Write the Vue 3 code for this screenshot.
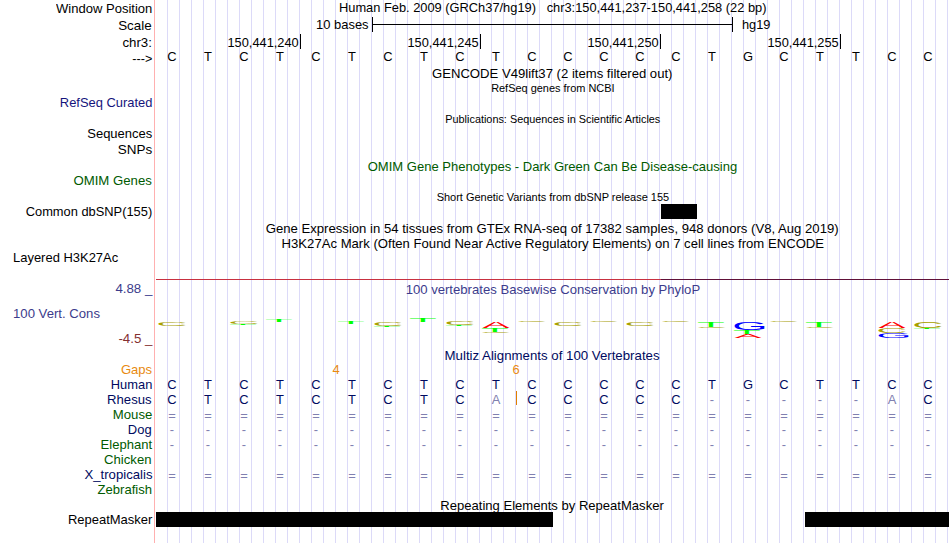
<script setup>
// Condenses a text run horizontally so it takes the given width.
const vFit = {
  mounted(el, { value }) {
    el.style.transform = `scaleX(${value / el.getBoundingClientRect().width})`
  },
}

// at: text baseline, w: text width
const labelList = [
  { text: 'Window Position', at: 13, w: 96.3 },
  { text: 'Scale', at: 30, w: 33.5 },
  { text: 'chr3:', at: 47, w: 29.5 },
  { text: '--->', at: 63, w: 20 },
  { text: 'RefSeq Curated', at: 107, w: 92.5, tone: 'blue' },
  { text: 'Sequences', at: 138, w: 65 },
  { text: 'SNPs', at: 154, w: 34.5 },
  { text: 'OMIM Genes', at: 185, w: 78.5, tone: 'green' },
  { text: 'Common dbSNP(155)', at: 216, w: 126.5 },
  { text: 'Layered H3K27Ac', at: 262, w: 105.2, side: 'start' },
  { text: '4.88 _', at: 293, w: 37, tone: 'indigo', side: 'edge' },
  { text: '100 Vert. Cons', at: 318, w: 87, tone: 'indigo', side: 'start' },
  { text: '-4.5 _', at: 343, w: 34, tone: 'maroon', side: 'edge' },
  { text: 'Gaps', at: 374, w: 31.2, tone: 'orange' },
  { text: 'Human', at: 389, w: 41.5, tone: 'navy' },
  { text: 'Rhesus', at: 404, w: 44.5, tone: 'navy' },
  { text: 'Mouse', at: 419, w: 39.5, tone: 'green' },
  { text: 'Dog', at: 434, w: 23.8, tone: 'navy' },
  { text: 'Elephant', at: 449, w: 51.5, tone: 'green' },
  { text: 'Chicken', at: 464, w: 47.5, tone: 'green' },
  { text: 'X_tropicalis', at: 479, w: 68, tone: 'navy' },
  { text: 'Zebrafish', at: 494, w: 54.5, tone: 'green' },
  { text: 'RepeatMasker', at: 524, w: 84.5 },
]
const labels = labelList.map((l, i) => ({
  ...l,
  h: i ? l.at - labelList[i - 1].at : l.at + 3,
}))

const HUMAN = 'CTCTCTCTCTCCCCCTGCTTCC'
const rows = [
  { kind: 'title', h: 15, w: 427.5, text: 'Human Feb. 2009 (GRCh37/hg19)\u00a0\u00a0 chr3:150,441,237-150,441,258 (22 bp)' },
  { kind: 'scale', h: 19 },
  { kind: 'ticks', h: 15 },
  { kind: 'bases', h: 15, text: HUMAN },
  { kind: 'title', h: 17, w: 240.5, text: 'GENCODE V49lift37 (2 items filtered out)' },
  { kind: 'title', h: 14, w: 123.5, small: true, text: 'RefSeq genes from NCBI' },
  { kind: 'title', h: 31, w: 215, small: true, text: 'Publications: Sequences in Scientific Articles' },
  { kind: 'title', h: 48, w: 369.5, tone: 'green', text: 'OMIM Gene Phenotypes - Dark Green Can Be Disease-causing' },
  { kind: 'title', h: 30, w: 232.5, small: true, text: 'Short Genetic Variants from dbSNP release 155' },
  { kind: 'blocks', h: 15, items: [[505, 36]] },
  { kind: 'title', h: 17, w: 573, text: 'Gene Expression in 54 tissues from GTEx RNA-seq of 17382 samples, 948 donors (V8, Aug 2019)' },
  { kind: 'title', h: 15, w: 542.5, text: 'H3K27Ac Mark (Often Found Near Active Regulatory Elements) on 7 cell lines from ENCODE' },
  { kind: 'rule', h: 29 },
  { kind: 'title', h: 17, w: 294.5, tone: 'indigo', text: '100 vertebrates Basewise Conservation by PhyloP' },
  { kind: 'logo', h: 51 },
  { kind: 'title', h: 15, w: 215, tone: 'navy', text: 'Multiz Alignments of 100 Vertebrates' },
  { kind: 'gaps', h: 14 },
  { kind: 'bases', h: 15, tone: 'navy', text: HUMAN },
  { kind: 'bases', h: 15, tone: 'navy', insert: true, text: 'CTCTCTCTCACCCCC-----AC', faint: [9, 15, 16, 17, 18, 19, 20] },
  { kind: 'bases', h: 15, tone: 'pale', low: true, text: '='.repeat(22) },
  { kind: 'bases', h: 15, tone: 'pale', text: '-'.repeat(22) },
  { kind: 'bases', h: 15, tone: 'pale', text: '-'.repeat(22) },
  { kind: 'space', h: 15 },
  { kind: 'bases', h: 15, tone: 'pale', low: true, text: '='.repeat(22) },
  { kind: 'space', h: 15 },
  { kind: 'title', h: 15, w: 223.5, low: true, text: 'Repeating Elements by RepeatMasker' },
  { kind: 'blocks', h: 15, items: [[0, 397], [252, 144]] },
]

const ticks = ['150,441,240', '150,441,245', '150,441,250', '150,441,255']

// Ink boxes of the letters at font size 100: left, width, height, descent
const INK = {
  C: { l: 5, w: 64, h: 74, d: 1.2, color: '#a8a000', out: 27.5, dx: 2.5 },
  T: { l: 2.1, w: 57, h: 69, d: 0, color: '#00ff00', out: 26, dx: 2 },
  A: { l: 0.2, w: 66.5, h: 69, d: 0, color: '#ff0000', out: 27, dx: 2.5 },
  G: { l: 5, w: 66, h: 71, d: 1.2, color: '#0000ff', out: 30, dx: 2.5 },
}
// column, letter, top, bottom (from the top of the track)
const stacks = [
  [0, 'C', 24.6, 29], [2, 'C', 24.7, 27.2], [2, 'T', 26.6, 28.1], [3, 'T', 22.1, 25],
  [5, 'T', 25, 27], [6, 'C', 24.6, 28.9], [6, 'T', 28.6, 30], [7, 'T', 21.1, 25],
  [8, 'C', 24.7, 28.1], [8, 'T', 27.5, 29], [9, 'A', 24.5, 31], [9, 'T', 31, 35],
  [9, 'C', 35, 35.9], [10, 'C', 24, 24.9], [11, 'C', 24.6, 28.9], [12, 'C', 24, 24.9],
  [13, 'C', 24.6, 28.9], [14, 'C', 24, 24.9], [15, 'T', 25, 30], [15, 'C', 30, 30.9],
  [16, 'G', 24.6, 33], [16, 'T', 33, 37], [16, 'A', 37, 41], [17, 'C', 24, 24.9],
  [18, 'T', 25, 30], [18, 'C', 30, 30.9], [20, 'A', 24.5, 31], [20, 'C', 31, 36],
  [20, 'G', 36, 41], [21, 'C', 24.6, 31], [21, 'T', 30.6, 32],
].map(([col, ch, top, bottom]) => {
  const k = INK[ch]
  const sx = k.out / k.w
  const sy = (bottom - top) / k.h
  const x = col * 36 + k.dx - k.l * sx
  const y = bottom - k.d * sy
  return { ch, color: k.color, transform: `matrix(${sx} 0 0 ${sy} ${x} ${y})` }
})
</script>

<template>
  <main class="browser">
    <aside class="labels">
      <div
        v-for="l in labels"
        :key="l.text"
        class="label"
        :class="[l.tone, l.side]"
        :style="{ height: l.h + 'px' }"
      >
        <span v-fit="l.w">{{ l.text }}</span>
      </div>
    </aside>

    <section class="plot">
      <div
        v-for="(r, i) in rows"
        :key="i"
        class="row"
        :class="[r.kind, r.tone, { small: r.small, low: r.low }]"
        :style="{ height: r.h + 'px' }"
      >
        <span v-if="r.kind === 'title'" v-fit="r.w">{{ r.text }}</span>

        <template v-else-if="r.kind === 'scale'">
          <div class="scale-left"><span v-fit="52.5">10 bases</span></div>
          <div class="bracket"><i></i></div>
          <span v-fit="28.5" class="assembly">hg19</span>
        </template>

        <template v-else-if="r.kind === 'ticks'">
          <div v-for="t in ticks" :key="t" class="tick"><span v-fit="71.3">{{ t }}</span></div>
        </template>

        <template v-else-if="r.kind === 'bases'">
          <b v-for="(c, n) in r.text" :key="n" :class="{ pale: r.faint?.includes(n) }">{{ c }}</b>
          <i v-if="r.insert" class="insert"></i>
        </template>

        <template v-else-if="r.kind === 'blocks'">
          <div
            v-for="[gap, width] in r.items"
            :key="gap"
            class="block"
            :style="{ marginLeft: gap + 'px', width: width + 'px' }"
          ></div>
        </template>

        <template v-else-if="r.kind === 'rule'"><i></i><i class="dark"></i></template>

        <svg v-else-if="r.kind === 'logo'" width="793" height="51" viewBox="0 0 793 51">
          <text v-for="(s, n) in stacks" :key="n" :transform="s.transform" :fill="s.color">{{ s.ch }}</text>
        </svg>

        <template v-else-if="r.kind === 'gaps'"><b>4</b><b>6</b></template>
      </div>
    </section>
  </main>
</template>

<style>
body {
  margin: 0;
  background: #fff;
}
</style>

<style scoped>
.browser {
  display: flex;
  width: 950px;
  height: 543px;
  overflow: hidden;
  font: 13.45px/15px "Liberation Sans", Arial, sans-serif;
  color: #000;
  background: #fff;
  white-space: nowrap;
}
.labels {
  box-sizing: border-box;
  width: 155px;
  border-right: 1px solid #ffb0b0;
}
.label {
  display: flex;
  align-items: flex-end;
  justify-content: flex-end;
  padding-right: 2px;
}
.label span {
  transform-origin: right;
}
.label.start {
  justify-content: flex-start;
  padding-left: 13px;
}
.label.start span {
  transform-origin: left;
}
.label.edge {
  padding-right: 1.5px;
}
.plot {
  width: 793px;
  margin-left: 1px;
  background: repeating-linear-gradient(90deg, transparent 0 11px, #dcdaf8 11px 12px);
}
.row {
  position: relative;
  display: flex;
}
.title {
  align-items: flex-end;
  justify-content: center;
}
.row.low {
  align-items: flex-start;
  line-height: 17px;
}
.small {
  font-size: 11.5px;
  line-height: 13px;
}
.scale {
  align-items: flex-start;
  line-height: 19px;
}
.scale-left {
  display: flex;
  justify-content: flex-end;
  width: 213px;
}
.scale-left span,
.tick span {
  transform-origin: right;
}
.assembly {
  transform-origin: left;
}
.bracket {
  box-sizing: border-box;
  display: flex;
  align-items: center;
  width: 361px;
  height: 15px;
  margin: 2px 9px 0 3px;
  border: solid #000;
  border-width: 0 1px;
}
.bracket i {
  flex: 1;
  height: 1px;
  background: #000;
}
.tick {
  box-sizing: border-box;
  display: flex;
  justify-content: flex-end;
  width: 180px;
  padding-right: 1px;
  border-right: 1px solid #000;
  line-height: 17px;
}
.tick:first-child {
  width: 145px;
}
.bases b {
  flex: none;
  width: 36px;
  font-weight: normal;
  text-align: center;
  transform: scaleX(0.96);
}
.bases b:first-child {
  margin-left: -1.6px;
}
.insert {
  position: absolute;
  left: 360px;
  top: -1px;
  width: 1px;
  height: 14px;
  background: #e08000;
}
.block {
  background: #000;
}
.rule {
  align-items: flex-end;
}
.rule i {
  width: 505px;
  height: 1px;
  background: #c83040;
}
.rule i.dark {
  width: 288px;
  background: #601038;
}
.logo text {
  font-size: 100px;
}
.gaps {
  color: #e88a10;
  line-height: 14px;
}
.gaps b {
  width: 180px;
  font-weight: normal;
  text-align: center;
  transform: scaleX(0.96);
}
.gaps b:first-child {
  margin-left: 89.5px;
}
.blue {
  color: #14147c;
}
.green {
  color: #005a00;
}
.indigo {
  color: #3c3c8c;
}
.maroon {
  color: #843030;
}
.orange {
  color: #e88a10;
}
.navy {
  color: #000a60;
}
.pale {
  color: #8080b0;
}
</style>
